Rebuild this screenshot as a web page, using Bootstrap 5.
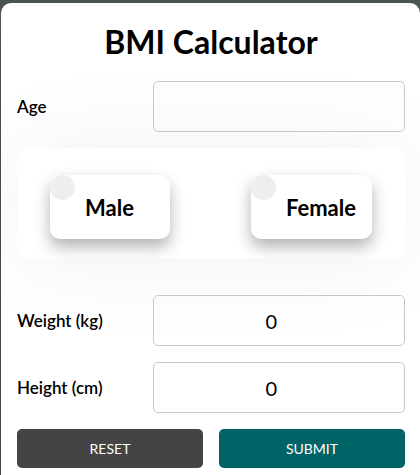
<!DOCTYPE html>
<html lang="en">
<head>
<meta charset="utf-8">
<meta name="viewport" content="width=device-width, initial-scale=1">
<title>BMI Calculator</title>
<link href="https://cdn.jsdelivr.net/npm/bootstrap@5.3.0/dist/css/bootstrap.min.css" rel="stylesheet">
<style>
body { font-family: Lato, "Open Sans", sans-serif; color: #000; background: linear-gradient(#4b5452, #444); padding: 3px 0 0 1px; }
.calc-panel { background: #fff; border-radius: 10px 10px 0 0; padding: 16px 15px 7px 16px; overflow: hidden; }
.calc-title { font-size: 32px; font-weight: 700; line-height: 46px; margin: 0; }
.calc-label { width: 35%; font-size: 17px; line-height: 24px; font-weight: 600; }
.calc-field { height: 51px; font-size: 20px; color: #000; background: transparent; border: 1px solid #c8c8c8; border-radius: 5px; position: relative; }
.gender-box { background: #fff; border-radius: 12px; padding: 27px 33px 20px; margin-bottom: 20px; box-shadow: 0 0 100px rgba(0, 0, 0, .06); }
.gender-card { min-width: 120px; height: 64px; padding: 0 16px 0 35px; background: #fff; border-radius: 10px; box-shadow: 0 8px 16px rgba(0, 0, 0, .3); font-size: 22px; font-weight: 700; }
.gender-radio { appearance: none; width: 25px; height: 25px; margin: 0; border-radius: 50%; background: #eee; }
.gender-radio:checked { background: #006466; }
.calc-btn { height: 39px; padding: 0; font-size: 14px; line-height: 20px; border: 0; border-radius: 5px; color: #fff; }
.calc-btn:hover { color: #fff; }
.btn-clear, .btn-clear:hover { background: #444; }
.btn-send, .btn-send:hover { background: #006466; }
</style>
</head>
<body class="min-vh-100 d-flex flex-column">
<main class="calc-panel flex-grow-1">
  <form class="d-flex flex-column gap-3">
    <h1 class="calc-title text-center">BMI Calculator</h1>
    <div class="d-flex align-items-center">
      <label class="calc-label flex-shrink-0" for="age">Age</label>
      <input class="calc-field form-control text-center" type="number" id="age">
    </div>
    <div class="gender-box d-flex justify-content-between" role="radiogroup" aria-label="Gender">
      <label class="gender-card position-relative d-flex align-items-center" for="male">
        <input class="gender-radio position-absolute top-0 start-0" type="radio" name="gender" id="male">Male
      </label>
      <label class="gender-card position-relative d-flex align-items-center" for="female">
        <input class="gender-radio position-absolute top-0 start-0" type="radio" name="gender" id="female">Female
      </label>
    </div>
    <div class="d-flex align-items-center">
      <label class="calc-label flex-shrink-0" for="weight">Weight (kg)</label>
      <input class="calc-field form-control text-center" type="number" id="weight" value="0">
    </div>
    <div class="d-flex align-items-center">
      <label class="calc-label flex-shrink-0" for="height">Height (cm)</label>
      <input class="calc-field form-control text-center" type="number" id="height" value="0">
    </div>
    <div class="d-flex gap-3">
      <button class="calc-btn btn-clear btn flex-fill w-50" type="reset">RESET</button>
      <button class="calc-btn btn-send btn flex-fill w-50" type="submit">SUBMIT</button>
    </div>
  </form>
</main>
<script src="https://cdn.jsdelivr.net/npm/bootstrap@5.3.0/dist/js/bootstrap.bundle.min.js"></script>
</body>
</html>
